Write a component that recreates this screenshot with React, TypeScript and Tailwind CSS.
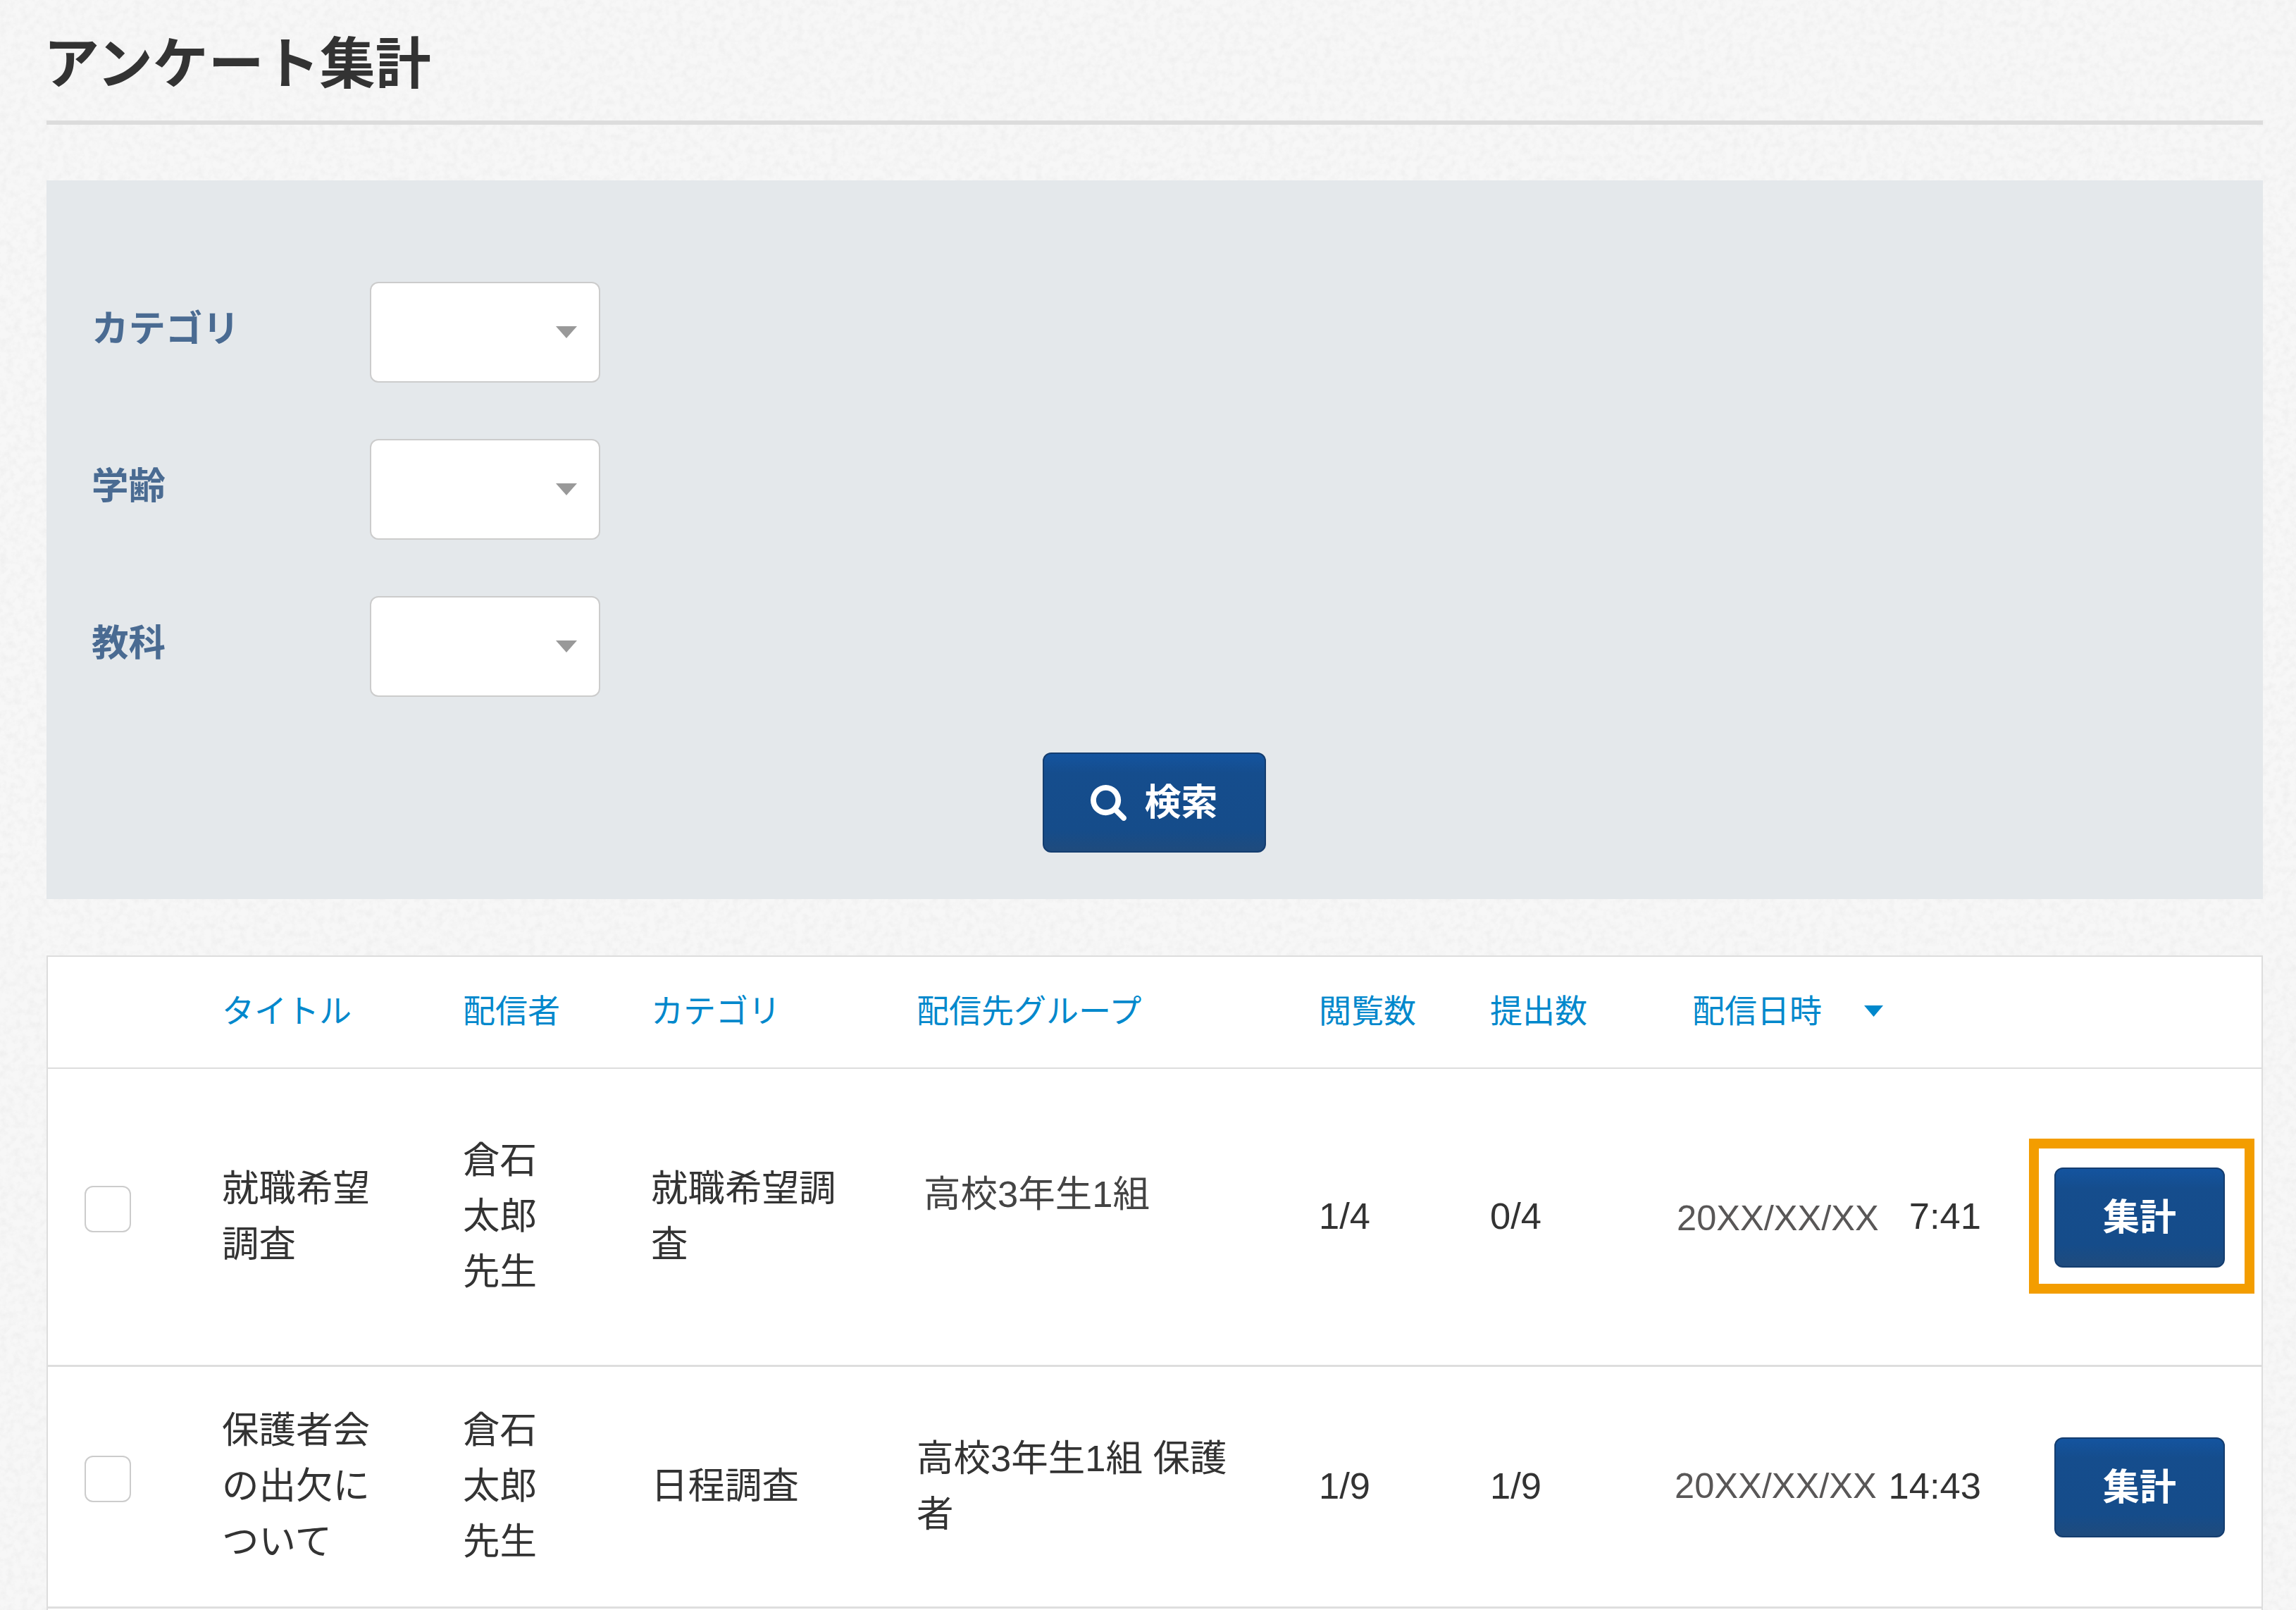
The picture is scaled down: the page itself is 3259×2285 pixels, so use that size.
import React, { useState } from 'react';

interface Survey {
  id: number;
  title: string;
  sender: string;
  category: string;
  group: string;
  views: string;
  answers: string;
  date: string;
  time: string;
  highlighted?: boolean;
}

const filters = ['カテゴリ', '学齢', '教科'];

const surveys: Survey[] = [
  {
    id: 1,
    title: '就職希望\n調査',
    sender: '倉石\n太郎\n先生',
    category: '就職希望調\n査',
    group: '高校3年生1組',
    views: '1/4',
    answers: '0/4',
    date: '20XX/XX/XX',
    time: '7:41',
    highlighted: true,
  },
  {
    id: 2,
    title: '保護者会\nの出欠に\nついて',
    sender: '倉石\n太郎\n先生',
    category: '日程調査',
    group: '高校3年生1組 保護\n者',
    views: '1/9',
    answers: '1/9',
    date: '20XX/XX/XX',
    time: '14:43',
  },
];

const columns = 'grid grid-cols-[247px_342px_267px_377px_571px_243px_262px_539px_294px]';

const buttonStyle =
  'flex items-center justify-center rounded-[12px] border-2 border-[#143d6f] bg-[linear-gradient(#14549f,#154d8d_20%,#154c8a_78%,#1f4b7d)] text-[52px] font-bold text-white';

const PaperTexture: React.FC = () => (
  <svg className="pointer-events-none absolute inset-0 h-full w-full opacity-[0.03]" aria-hidden="true">
    <filter id="paper">
      <feTurbulence type="fractalNoise" baseFrequency="0.1" numOctaves="3" stitchTiles="stitch" />
      <feColorMatrix values="0 0 0 0 0  0 0 0 0 0  0 0 0 0 0  1.6 0 0 0 -0.55" />
    </filter>
    <rect width="100%" height="100%" filter="url(#paper)" />
  </svg>
);

const SearchIcon: React.FC = () => (
  <svg viewBox="0 0 1664 1664" className="h-[51px] w-[51px] fill-current">
    <path d="M1152 704q0-185-131.500-316.500t-316.500-131.500-316.500 131.500-131.500 316.500 131.500 316.500 316.500 131.500 316.500-131.500 131.500-316.500zM1664 1536q0 52-38 90t-90 38q-54 0-90-38l-343-342q-179 124-399 124-143 0-273.500-55.500t-225-150-150-225-55.500-273.500 55.500-273.500 150-225 225-150 273.500-55.500 273.500 55.500 225 150 150 225 55.500 273.500q0 220-124 399l343 343q37 37 37 90z" />
  </svg>
);

const Caret: React.FC<{ className: string }> = ({ className }) => (
  <svg viewBox="0 0 30 17" preserveAspectRatio="none" className={className}>
    <path d="M0 0h30L15 17z" fill="currentColor" />
  </svg>
);

const SurveyRow: React.FC<{ survey: Survey; checked: boolean; onToggle: () => void }> = ({
  survey,
  checked,
  onToggle,
}) => (
  <div
    className={`${columns} items-center border-b-[3px] border-[#dedede] pb-[3px] text-[52.5px] leading-[79px] whitespace-pre-line ${
      survey.highlighted ? 'h-[423px]' : 'h-[343px]'
    }`}
  >
    <div className="pb-[20px] pl-[52px]">
      <button
        type="button"
        role="checkbox"
        aria-checked={checked}
        onClick={onToggle}
        className="block h-[66px] w-[66px] rounded-[12px] border-2 border-[#cccccc] bg-white"
      />
    </div>
    <div>{survey.title}</div>
    <div>{survey.sender}</div>
    <div>{survey.category}</div>
    <div className={survey.highlighted ? 'pb-[62px] pl-[10px] text-[#444444]' : ''}>{survey.group}</div>
    <div>{survey.views}</div>
    <div>{survey.answers}</div>
    <div className="flex items-center justify-between pr-[104px]">
      <span className={`text-[50.6px] text-[#595757] ${survey.highlighted ? 'pt-[6px] pl-[3px]' : ''}`}>
        {survey.date}
      </span>
      <span>{survey.time}</span>
    </div>
    <div className="relative pt-[5px]">
      <button type="button" className={`${buttonStyle} h-[142px] w-[242px]`}>
        集計
      </button>
      {survey.highlighted && (
        <div className="pointer-events-none absolute top-[-36px] left-[-36px] h-[220px] w-[320px] border-[14px] border-[#f39d00]" />
      )}
    </div>
  </div>
);

const App: React.FC = () => {
  const [selected, setSelected] = useState<number[]>([]);

  const toggle = (id: number) => {
    setSelected(prev => (prev.includes(id) ? prev.filter(s => s !== id) : [...prev, id]));
  };

  return (
    <div className="relative h-[2285px] w-[3259px] overflow-hidden bg-[#f7f7f7] font-['Liberation_Sans','Noto_Sans_CJK_JP',sans-serif] text-[#333333]">
      <PaperTexture />
      <main className="relative pr-[47px] pl-[66px]">
        <h1 className="flex h-[177px] items-center border-b-[6px] border-[#dcdcdc] pt-[12px] text-[79px] leading-none font-bold">
          <span className="-ml-[4px]">アンケート集計</span>
        </h1>

        {/* Search conditions */}
        <section className="mt-[79px] flex h-[1020px] flex-col bg-[#e4e8eb] pt-[144px]">
          <div className="flex flex-col gap-20 pl-16">
            {filters.map(label => (
              <div key={label} className="flex h-[143px] items-center">
                <span className="w-[395px] pb-[8px] text-[52.5px] leading-none font-bold text-[#4a6b92]">{label}</span>
                <button
                  type="button"
                  aria-label={label}
                  className="flex h-[143px] w-[327px] items-center justify-end rounded-[12px] border-2 border-[#cccccc] bg-white pr-[31px]"
                >
                  <Caret className="h-[17px] w-[30px] text-[#999999]" />
                </button>
              </div>
            ))}
          </div>
          <button type="button" className={`${buttonStyle} mt-[79px] ml-[1414px] h-[142px] w-[317px] gap-[25px]`}>
            <SearchIcon />
            <span>検索</span>
          </button>
        </section>

        {/* Survey list */}
        <section className="mt-20 h-[1000px] border-2 border-[#dddddd] bg-white">
          <div
            className={`${columns} h-[159px] items-center border-b-2 border-[#dddddd] pb-[4px] text-[46px] leading-none text-[#0088cc]`}
          >
            <span />
            <span>タイトル</span>
            <span>配信者</span>
            <span>カテゴリ</span>
            <span>配信先グループ</span>
            <span>閲覧数</span>
            <span>提出数</span>
            <span className="flex items-center gap-[60px] pl-[25px]">
              配信日時
              <Caret className="h-[16px] w-[27px]" />
            </span>
            <span />
          </div>
          {surveys.map(survey => (
            <SurveyRow
              key={survey.id}
              survey={survey}
              checked={selected.includes(survey.id)}
              onToggle={() => toggle(survey.id)}
            />
          ))}
        </section>
      </main>
    </div>
  );
};

export default App;
